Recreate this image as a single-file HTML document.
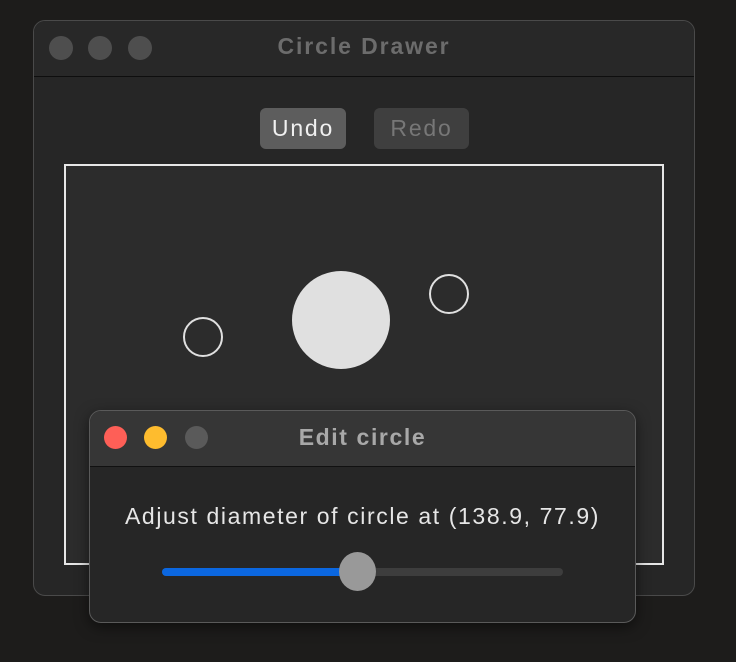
<!DOCTYPE html><html><head><style>
body{margin:0;width:736px;height:662px;background:#1d1c1b;font-family:"Liberation Sans",sans-serif;position:relative;overflow:hidden}
div{position:absolute;box-sizing:border-box}
.dot{border-radius:50%}
</style></head><body>
<div style="left:33px;top:20px;width:662px;height:576px;background:#262626;border:1px solid #4a4a4a;border-radius:12px;overflow:hidden">
 <div style="left:0;top:0;width:100%;height:56px;background:#282828;border-bottom:1px solid #0e0e0e"></div>
 <div class="dot" style="left:15px;top:15px;width:24px;height:24px;background:#4e4e4e"></div>
 <div class="dot" style="left:54px;top:15px;width:24px;height:24px;background:#4e4e4e"></div>
 <div class="dot" style="left:94px;top:15px;width:24px;height:24px;background:#4e4e4e"></div>
 <div style="left:0;width:100%;top:12px;text-align:center;font-weight:bold;font-size:23px;letter-spacing:1.9px;color:#6c6c6c">Circle Drawer</div>
 <div style="left:226px;top:87px;width:86px;height:41px;background:#5d5d5d;border-radius:6px;color:#f0f0f0;font-size:23px;letter-spacing:1.8px;text-align:center;line-height:41px">Undo</div>
 <div style="left:340px;top:87px;width:95px;height:41px;background:#3f3f3f;border-radius:6px;color:#777;font-size:23px;letter-spacing:1.8px;text-align:center;line-height:41px">Redo</div>
 <div style="left:30px;top:143px;width:600px;height:401px;border:2px solid #e6e6e6;background:#2c2c2c"></div>
</div>
<div class="dot" style="left:292px;top:271px;width:98px;height:98px;background:#e0e0e0"></div>
<div class="dot" style="left:183px;top:317px;width:40px;height:40px;border:2px solid #e0e0e0"></div>
<div class="dot" style="left:429px;top:274px;width:40px;height:40px;border:2px solid #e0e0e0"></div>
<div style="left:89px;top:410px;width:547px;height:213px;background:#262626;border:1px solid #5a5a5a;border-radius:12px;overflow:hidden;box-shadow:0 4px 14px rgba(0,0,0,.5)">
 <div style="left:0;top:0;width:100%;height:56px;background:#363636;border-bottom:1px solid #111"></div>
 <div class="dot" style="left:14px;top:15px;width:23px;height:23px;background:#fe5f57"></div>
 <div class="dot" style="left:54px;top:15px;width:23px;height:23px;background:#febc2e"></div>
 <div class="dot" style="left:95px;top:15px;width:23px;height:23px;background:#5a5a5a"></div>
 <div style="left:0;width:100%;top:13px;text-align:center;font-weight:bold;font-size:23px;letter-spacing:1.6px;color:#a8a8a8">Edit circle</div>
 <div style="left:0;width:100%;top:92px;text-align:center;font-size:23px;letter-spacing:1.6px;color:#e6e6e6">Adjust diameter of circle at (138.9, 77.9)</div>
 <div style="left:72px;top:157px;width:401px;height:8px;border-radius:4px;background:#3d3d3d"></div>
 <div style="left:72px;top:157px;width:195px;height:8px;border-radius:4px;background:#0b67e0"></div>
 <div class="dot" style="left:249px;top:141px;width:37px;height:39px;background:#999"></div>
</div>
</body></html>
